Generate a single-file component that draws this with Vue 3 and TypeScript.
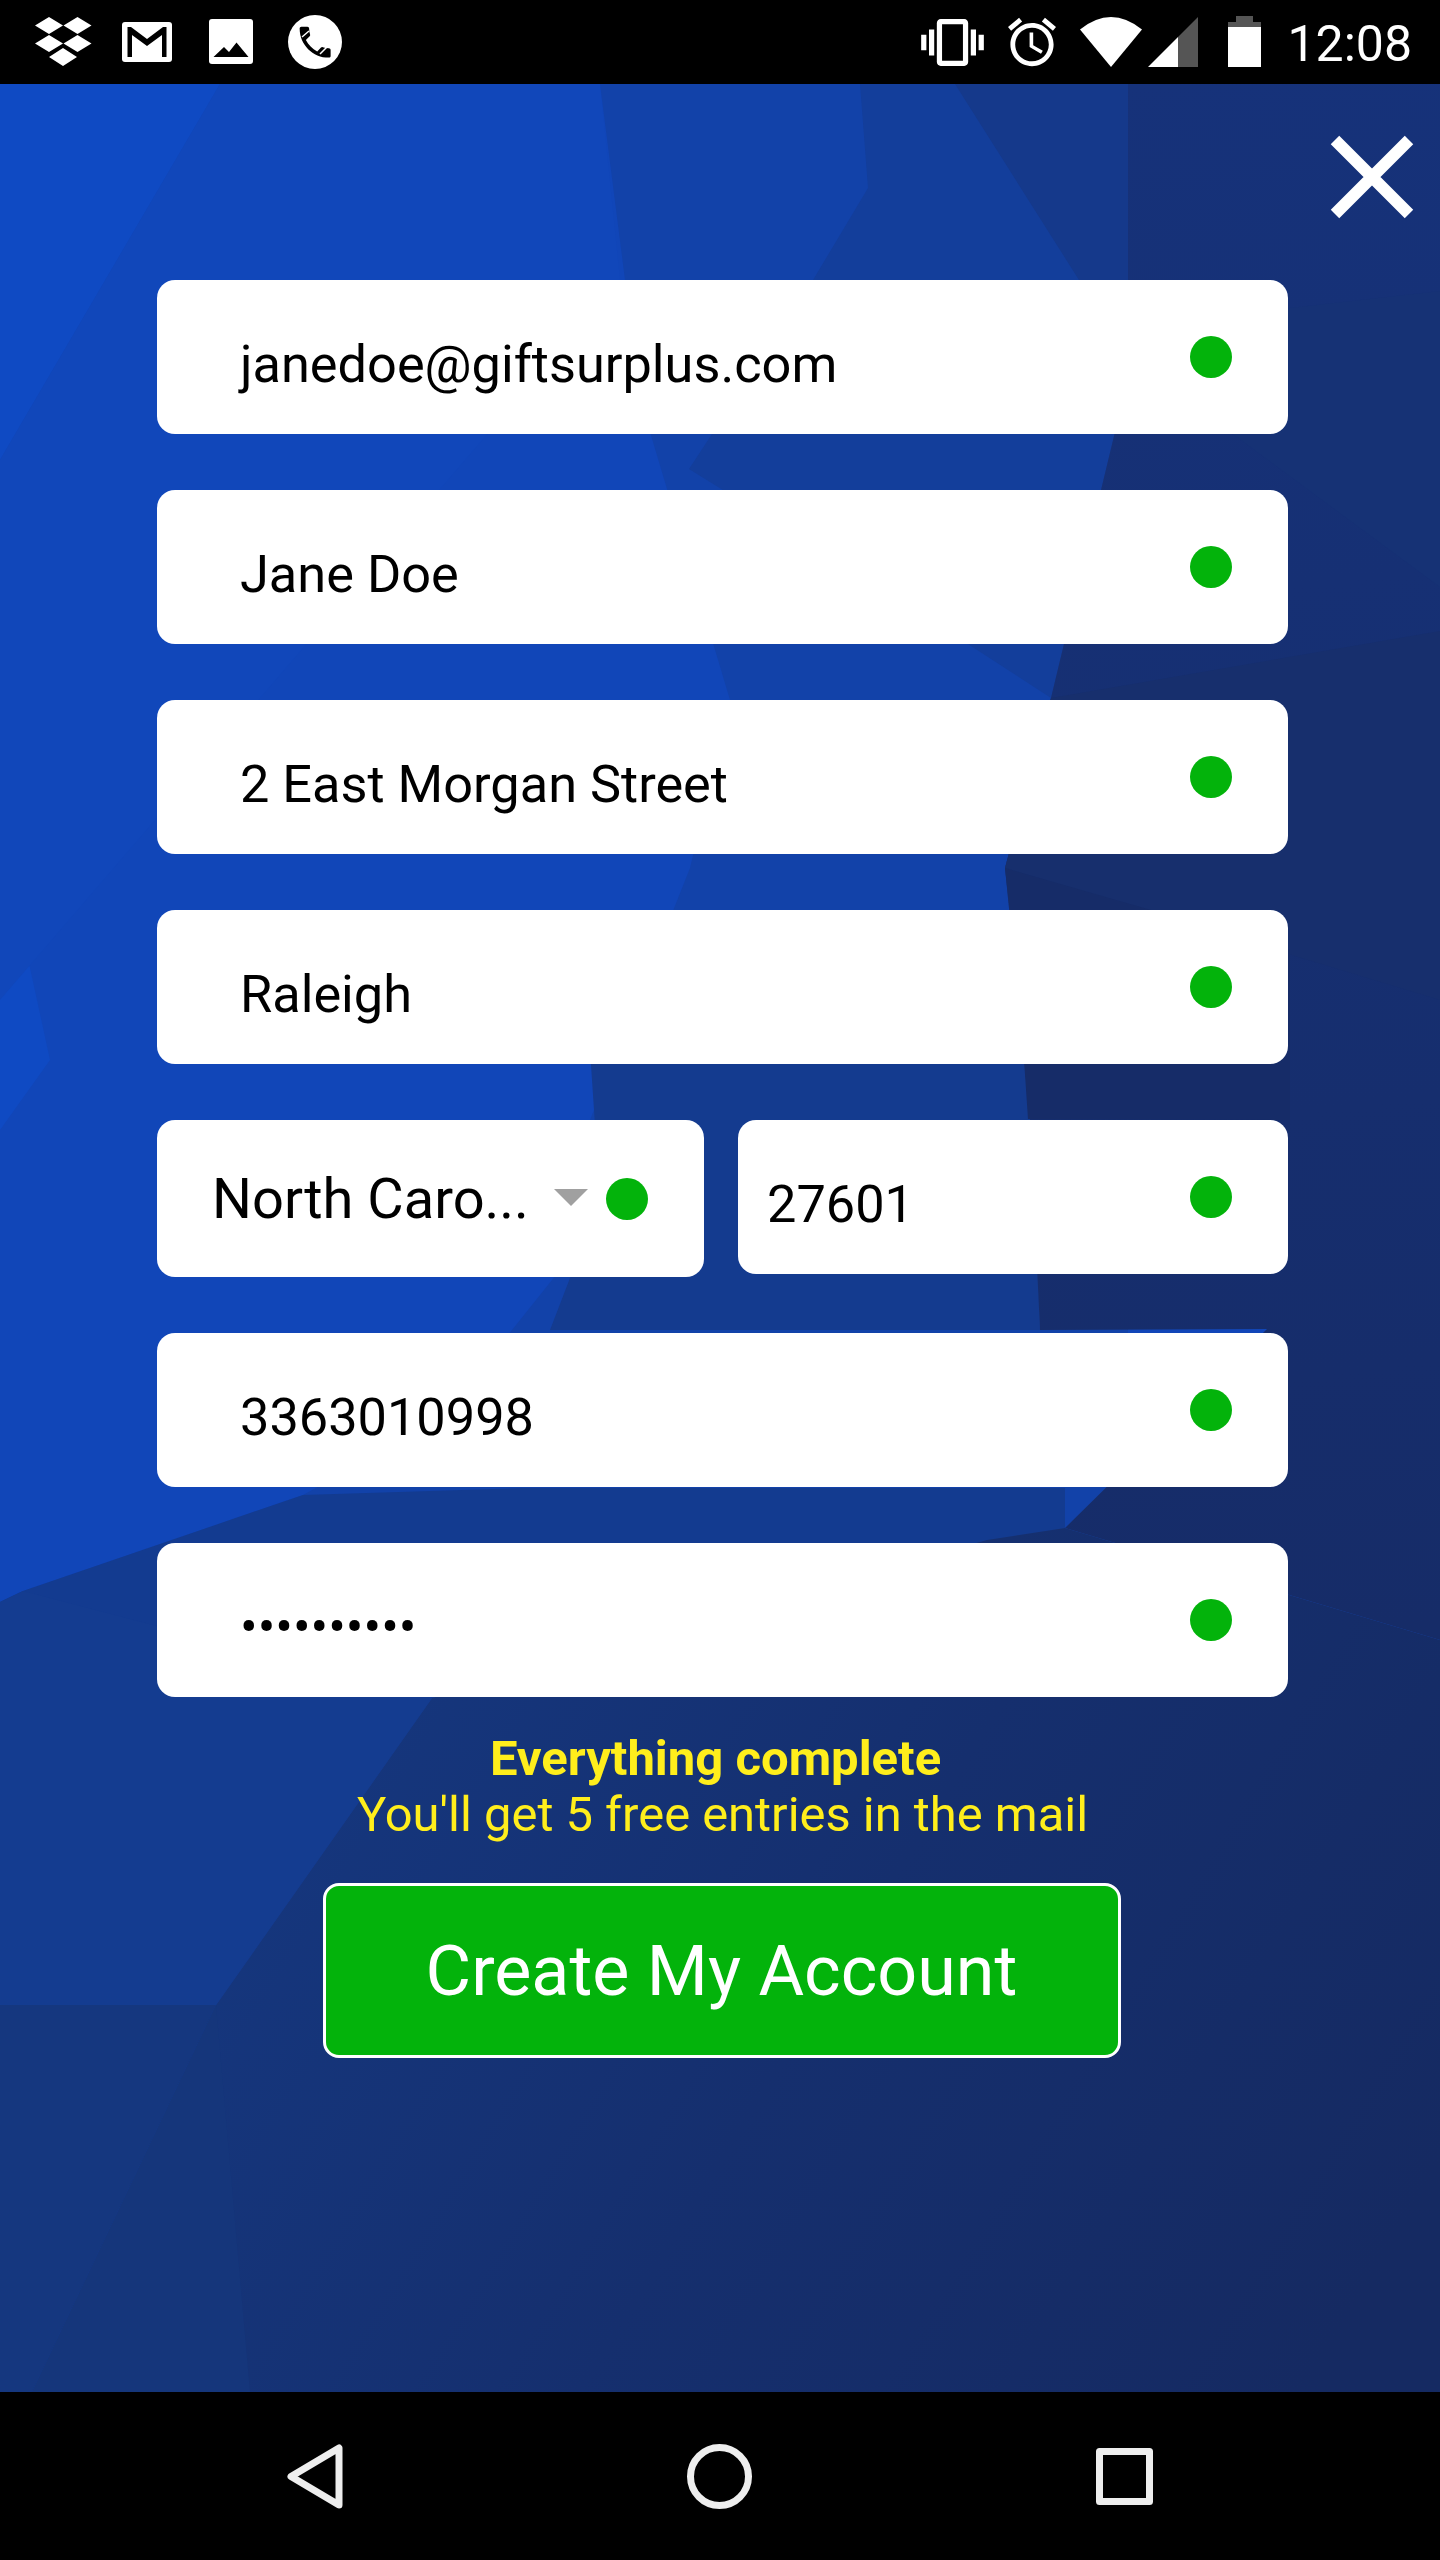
<script setup lang="ts">
interface Poly { points: string; fill: string }

const topFields: string[] = ['janedoe@giftsurplus.com', 'Jane Doe', '2 East Morgan Street', 'Raleigh']

const polys: Poly[] = [
  { points: '0,84 220,84 0,460', fill: '#0f4ac3' },
  { points: '0,830 50,1060 0,1130', fill: '#0f4ac3' },
  { points: '220,84 600,84 620,280 0,1000 0,460', fill: '#1147ba' },
  { points: '600,84 1128,84 1128,2392 0,2392 0,1602 23,1591 303,1495 440,1420 560,1270 590,1120 690,868 730,700 650,432 625,280', fill: '#1242a9' },
  { points: '860,84 1128,84 1128,700 1005,868 1051,698 900,600 689,469 813,280 868,188', fill: '#133e9b' },
  { points: '955,84 1128,84 1128,1330 1030,1119 1005,868 1051,698 1115,432 1079,280', fill: '#15398b' },
  { points: '590,1050 1030,1050 1040,1330 550,1330 600,1200', fill: '#143b8f' },
  { points: '523,1488 1065,1488 1065,1530 987,1545 432,1698 0,1602 23,1591 303,1495', fill: '#133b90' },
  { points: '23,1591 432,1698 216,2005 0,2005 0,1602', fill: '#143c90' },
  { points: '0,2005 216,2005 32,2392 0,2392', fill: '#15377f' },
  { points: '1128,84 1440,84 1440,1640 1065,1528 1267,1329 1040,1330 1030,1119 1005,868 1051,698 1115,432 1128,280', fill: 'url(#deepUpper)' },
  { points: '1115,328 1440,291 1440,587 1230,432 1115,432', fill: '#163275' },
  { points: '1051,698 1440,631 1440,1000 1005,868', fill: '#172f6d' },
  { points: '1005,868 1290,950 1290,1120 1028,1119 1020,1000', fill: '#162c68' },
  { points: '216,2005 432,1698 987,1540 1065,1528 1440,1640 1440,2392 32,2392', fill: 'url(#deepLower)' },
  { points: '216,2005 32,2392 250,2392', fill: '#15367b' }
]
</script>

<template>
  <div class="screen">
    <header class="status">
      <div class="status-left">
        <svg class="ic-dropbox" viewBox="0 0 57 49" width="57" height="49" fill="#fff">
          <path d="M14 0l14 8.500-14 8.500L0 8.500zM42.500 0l14 8.500-14 8.500-14-8.500zM14 18l14 8.500-14 8.500-14-8.500zM42.500 18l14 8.500-14 8.500-14-8.500zM28 31l14 9-14 9-14-9z" />
        </svg>
        <svg class="ic-gmail" viewBox="0 0 50 40" width="50" height="40">
          <rect width="50" height="40" rx="3" fill="#fff" />
          <path d="M5.500 5H9L25 17 41 5h3.500v30H40V13L25 24 10 13v22H5.500z" fill="#000" />
        </svg>
        <svg class="ic-image" viewBox="0 0 44 45" width="44" height="45">
          <rect width="44" height="45" rx="3" fill="#fff" />
          <path d="M4.500 38L15 28l5 5 7.500-9.500L39.500 38z" fill="#000" />
        </svg>
        <svg class="ic-phone" viewBox="0 0 54 54" width="54" height="54">
          <circle cx="27" cy="27" r="27" fill="#fff" />
          <g transform="translate(6.500 6.500) scale(1.72)">
            <path d="M6.620 10.790c1.440 2.830 3.760 5.140 6.590 6.590l2.200-2.200c.27-.27.67-.36 1.020-.24 1.120.37 2.330.57 3.570.57.55 0 1 .45 1 1V20c0 .55-.45 1-1 1-9.390 0-17-7.610-17-17 0-.55.45-1 1-1h3.500c.55 0 1 .45 1 1 0 1.250.2 2.450.57 3.570.11.35.03.74-.25 1.020l-2.200 2.200z" fill="#000" />
          </g>
          <path d="M14 22l7-6M32 39l7-7" stroke="#fff" stroke-width="1.500" />
        </svg>
      </div>
      <div class="status-right">
        <svg class="ic-vibrate" viewBox="0 3 24 18" width="63" height="47" fill="#fff">
          <path d="M0 15h2V9H0v6zm3 2h2V7H3v10zm19-8v6h2V9h-2zm-3 8h2V7h-2v10zM16.500 3h-9C6.670 3 6 3.670 6 4.500v15c0 .83.67 1.500 1.500 1.500h9c.83 0 1.500-.67 1.500-1.500v-15c0-.83-.67-1.500-1.500-1.500zM16 19H8V5h8v14z" />
        </svg>
        <svg class="ic-alarm" viewBox="2 1.860 20 20.140" width="48" height="50" fill="#fff">
          <path d="M22 5.720l-4.600-3.860-1.290 1.530 4.600 3.860L22 5.720zM7.880 3.390L6.600 1.860 2 5.710l1.290 1.530 4.590-3.850zM12.500 8H11v6l4.750 2.850.75-1.230-4-2.370V8zM12 4c-4.970 0-9 4.030-9 9s4.030 9 9 9c4.970 0 9-4.030 9-9s-4.030-9-9-9zm0 16c-3.870 0-7-3.130-7-7s3.130-7 7-7 7 3.130 7 7-3.130 7-7 7z" />
        </svg>
        <svg class="ic-wifi" viewBox="0 0 62 50" width="62" height="50">
          <path d="M31 50L0 12.500Q31-12.500 62 12.500z" fill="#fff" />
        </svg>
        <svg class="ic-signal" viewBox="0 0 50 50" width="50" height="50">
          <path d="M0 50l30-30v30z" fill="#fff" />
          <path d="M30 20L50 0v50H30z" fill="#555" />
        </svg>
        <svg class="ic-battery" viewBox="0 0 33 51" width="33" height="51">
          <path d="M8 0h17v6h8v5H0V6h8z" fill="#555" />
          <rect y="11" width="33" height="40" fill="#fff" />
        </svg>
        <span class="clock">12:08</span>
      </div>
    </header>

    <main class="main">
      <svg class="backdrop" viewBox="0 84 1440 2308" width="1440" height="2308" preserveAspectRatio="none" aria-hidden="true">
        <defs>
          <linearGradient id="deepUpper" gradientUnits="userSpaceOnUse" x1="1100" y1="84" x2="1300" y2="1640">
            <stop offset="0" stop-color="#16327a" />
            <stop offset="1" stop-color="#162c68" />
          </linearGradient>
          <linearGradient id="deepLower" gradientUnits="userSpaceOnUse" x1="250" y1="1750" x2="1300" y2="2392">
            <stop offset="0" stop-color="#15377f" />
            <stop offset="0.5" stop-color="#152f6e" />
            <stop offset="1" stop-color="#152a62" />
          </linearGradient>
        </defs>
        <rect x="0" y="84" width="1440" height="2308" fill="#1146b8" />
        <polygon v-for="(p, i) in polys" :key="i" :points="p.points" :fill="p.fill" />
      </svg>

      <svg class="close" viewBox="0 0 84 84" width="84" height="84" aria-label="Close">
        <path d="M5 5l74 74M79 5L5 79" stroke="#fff" stroke-width="12" fill="none" />
      </svg>

      <form class="form" @submit.prevent>
        <div v-for="value in topFields" :key="value" class="field">
          <span class="val">{{ value }}</span>
          <i class="dot"></i>
        </div>

        <div class="split">
          <div class="select">
            <span class="select-val">North Caro...</span>
            <i class="caret"></i>
            <i class="dot select-dot"></i>
          </div>
          <div class="field zip">
            <span class="val">27601</span>
            <i class="dot"></i>
          </div>
        </div>

        <div class="field">
          <span class="val">3363010998</span>
          <i class="dot"></i>
        </div>
        <div class="field">
          <span class="val secret">••••••••••</span>
          <i class="dot"></i>
        </div>

        <div class="note">
          <strong class="note-title">Everything complete</strong>
          <span class="note-sub">You'll get 5 free entries in the mail</span>
        </div>

        <button class="cta" type="button">Create My Account</button>
      </form>
    </main>

    <nav class="nav">
      <svg viewBox="0 0 56 65" width="56" height="65" fill="none" stroke="#eee" stroke-width="7" stroke-linejoin="round">
        <path d="M52 4v57L4 32.500z" />
      </svg>
      <svg viewBox="0 0 65 65" width="65" height="65" fill="none" stroke="#eee" stroke-width="7">
        <circle cx="32.500" cy="32.500" r="29" />
      </svg>
      <svg viewBox="0 0 57 57" width="57" height="57" fill="none" stroke="#eee" stroke-width="7" stroke-linejoin="round">
        <rect x="3.500" y="3.500" width="50" height="50" />
      </svg>
    </nav>
  </div>
</template>

<style scoped>
.screen {
  width: 1440px;
  height: 2560px;
  display: flex;
  flex-direction: column;
  font-family: Roboto, "Liberation Sans", sans-serif;
  background: #000;
  overflow: hidden;
}

.status {
  height: 84px;
  flex: none;
  display: flex;
  justify-content: space-between;
  background: #000;
  color: #fff;
}
.status-left,
.status-right {
  display: flex;
  align-items: flex-start;
}
.status-left { padding-left: 35px; }
.status-right { padding-right: 28px; }
.ic-dropbox { margin-top: 17px; }
.ic-gmail { margin: 22px 0 0 30px; }
.ic-image { margin: 19px 0 0 37px; }
.ic-phone { margin: 15px 0 0 35px; }
.ic-vibrate { margin-top: 19px; }
.ic-alarm { margin: 17px 0 0 24px; }
.ic-wifi { margin: 17px 0 0 24px; }
.ic-signal { margin: 17px 0 0 6px; }
.ic-battery { margin: 16px 0 0 30px; }
.clock {
  margin-left: 26px;
  font-size: 50px;
  line-height: 89px;
  height: 84px;
}

.main {
  position: relative;
  flex: 1;
  min-height: 0;
}
.backdrop {
  position: absolute;
  inset: 0;
  display: block;
}
.close {
  position: absolute;
  top: 51px;
  right: 26px;
}

.form {
  position: relative;
  width: 1131px;
  margin-left: 157px;
  padding-top: 196px;
  display: flex;
  flex-direction: column;
  gap: 56px;
}

.field {
  height: 154px;
  box-sizing: border-box;
  display: flex;
  align-items: center;
  justify-content: space-between;
  padding: 0 56px 0 83px;
  background: #fff;
  border-radius: 18px;
}
.val {
  font-size: 52.300px;
  line-height: 60px;
  color: #000;
  margin-top: 14px;
}
.secret { margin-top: 14px; }
.dot {
  flex: none;
  width: 42px;
  height: 42px;
  border-radius: 50%;
  background: #03b30b;
}

.split {
  display: flex;
  align-items: flex-start;
  justify-content: space-between;
}
.select {
  width: 547px;
  height: 157px;
  box-sizing: border-box;
  display: flex;
  align-items: center;
  padding-left: 55px;
  background: #fff;
  border-radius: 18px;
}
.select-val {
  font-size: 56px;
  line-height: 64px;
  color: #000;
  width: 342px;
  white-space: nowrap;
}
.caret {
  flex: none;
  width: 0;
  height: 0;
  margin-top: -2px;
  border-left: 17px solid transparent;
  border-right: 17px solid transparent;
  border-top: 17px solid #a0a0a0;
}
.select-dot { margin: 0 0 0 18px; }
.zip {
  width: 550px;
  padding-left: 29px;
}

.note {
  margin-top: -22px;
  display: flex;
  flex-direction: column;
  align-items: center;
  color: #ffee1c;
  font-size: 48.900px;
  line-height: 56px;
}
.note-title {
  font-weight: 700;
  font-size: 49px;
  margin-right: 14px;
}

.cta {
  align-self: center;
  width: 798px;
  height: 175px;
  margin: -16px 0 0 -2px;
  padding: 0;
  background: #03b30b;
  border: 3.500px solid #fff;
  border-radius: 16px;
  color: #fff;
  font-family: inherit;
  font-size: 70px;
}

.nav {
  height: 168px;
  flex: none;
  display: flex;
  align-items: center;
  justify-content: center;
  gap: 344px;
  background: #000;
}
</style>
